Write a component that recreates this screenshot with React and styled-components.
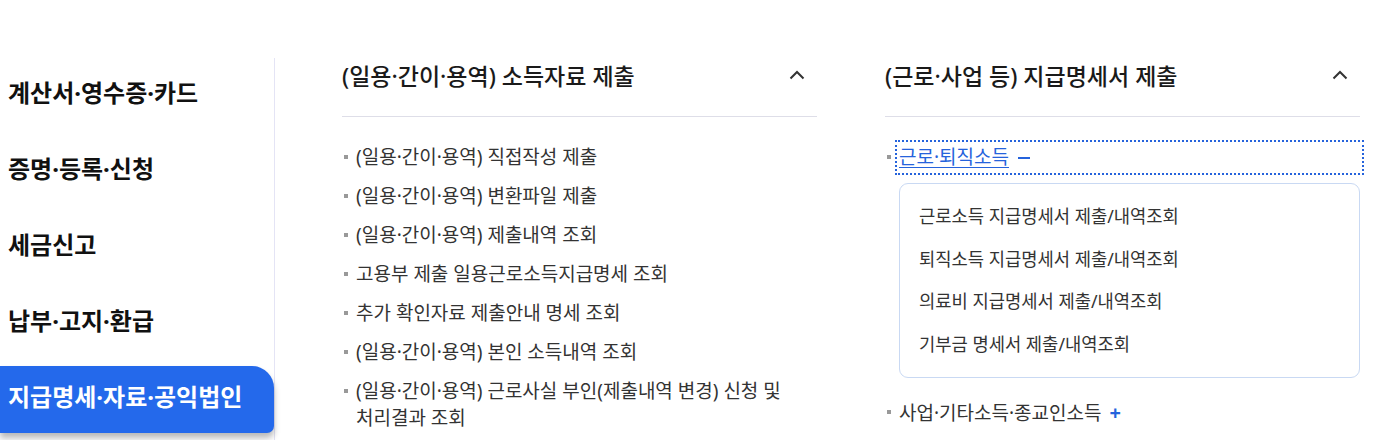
import React from "react";
import styled, { createGlobalStyle } from "styled-components";

const Global = createGlobalStyle`
  html, body { margin: 0; padding: 0; background: #fff; }
  body { font-family: "Noto Sans", "Noto Sans CJK KR", sans-serif; color: #222; }
  ul { list-style: none; margin: 0; padding: 0; }
`;

const Page = styled.div`
  display: flex;
  align-items: flex-start;
  padding-top: 58px;
  height: 382px;
  overflow: hidden;
`;

const Sidebar = styled.nav`
  width: 274px;
  flex: none;
  border-right: 1px solid #e4e4f5;
  padding-top: 4px;
  display: flex;
  flex-direction: column;
  gap: 9px;
  min-height: 400px;
`;

const SideItem = styled.a`
  display: flex;
  align-items: center;
  height: 67px;
  padding-left: 8px;
  padding-bottom: 9px;
  box-sizing: border-box;
  font-size: 24px;
  font-weight: 700;
  color: ${(p) => (p.$active ? "#fff" : "#111")};
  background: ${(p) => (p.$active ? "#2469eb" : "transparent")};
  border-radius: 0 22px 7px 0;
  box-shadow: ${(p) => (p.$active ? "0 5px 6px rgba(0,0,0,0.28)" : "none")};
  text-decoration: none;
`;

const Columns = styled.div`
  display: flex;
  gap: 68px;
  margin-left: 67px;
`;

const Column = styled.section`
  width: 475px;
`;

const Header = styled.div`
  display: flex;
  align-items: center;
  justify-content: space-between;
  height: 36px;
  padding-bottom: 22px;
  border-bottom: 1px solid #dedee8;
`;

const Title = styled.h3`
  margin: 0;
  font-size: 23px;
  font-weight: 500;
  color: #1a1a1a;
  padding-bottom: 2px;
`;

const Chevron = styled.svg`
  width: 16px;
  height: 10px;
  margin-right: 12px;
  margin-bottom: 3px;
`;

const List = styled.ul`
  display: flex;
  flex-direction: column;
  gap: 12px;
  padding-top: 27px;
`;

const Item = styled.li`
  position: relative;
  padding-left: 14px;
  font-size: 19px;
  line-height: 27px;
  color: #333;
  word-break: keep-all;
  &::before {
    content: "";
    position: absolute;
    left: 2px;
    top: 11px;
    width: 4px;
    height: 4px;
    background: #999;
  }
`;

const FocusLink = styled.a`
  display: block;
  color: #2563dc;
  outline: 2px dotted #2563dc;
  outline-offset: 2px;
  span {
    text-decoration: underline;
    text-underline-offset: 3px;
  }
`;

const Minus = styled.i`
  display: inline-block;
  width: 12px;
  height: 2px;
  background: #2563dc;
  margin-left: 9px;
  vertical-align: middle;
  position: relative;
  top: -1px;
`;

const Plus = styled.span`
  color: #2563dc;
  font-weight: 700;
  margin-left: 8px;
  font-size: 20px;
`;

const SubBox = styled.ul`
  margin: 12px 0 9px 0;
  border: 1px solid #c9d9f3;
  border-radius: 9px;
  padding: 20px 19px 21px;
  display: flex;
  flex-direction: column;
  gap: 18.6px;
`;

const SubItem = styled.li`
  font-size: 17.7px;
  line-height: 24px;
  color: #333;
`;

const Up = () => (
  <Chevron viewBox="0 0 16 10">
    <polyline points="1.5,8.5 8,2 14.5,8.5" fill="none" stroke="#333" strokeWidth="2" />
  </Chevron>
);

const side = [
  "계산서·영수증·카드",
  "증명·등록·신청",
  "세금신고",
  "납부·고지·환급",
  "지급명세·자료·공익법인",
];

const leftItems = [
  "(일용·간이·용역) 직접작성 제출",
  "(일용·간이·용역) 변환파일 제출",
  "(일용·간이·용역) 제출내역 조회",
  "고용부 제출 일용근로소득지급명세 조회",
  "추가 확인자료 제출안내 명세 조회",
  "(일용·간이·용역) 본인 소득내역 조회",
  "(일용·간이·용역) 근로사실 부인(제출내역 변경) 신청 및 처리결과 조회",
];

const subItems = [
  "근로소득 지급명세서 제출/내역조회",
  "퇴직소득 지급명세서 제출/내역조회",
  "의료비 지급명세서 제출/내역조회",
  "기부금 명세서 제출/내역조회",
];

export default function App() {
  return (
    <>
      <Global />
      <Page>
        <Sidebar>
          {side.map((s, i) => (
            <SideItem key={s} $active={i === side.length - 1}>
              {s}
            </SideItem>
          ))}
        </Sidebar>
        <Columns>
          <Column>
            <Header>
              <Title>(일용·간이·용역) 소득자료 제출</Title>
              <Up />
            </Header>
            <List>
              {leftItems.map((t) => (
                <Item key={t}>{t}</Item>
              ))}
            </List>
          </Column>
          <Column>
            <Header>
              <Title>(근로·사업 등) 지급명세서 제출</Title>
              <Up />
            </Header>
            <List>
              <Item>
                <FocusLink>
                  <span>근로·퇴직소득</span>
                  <Minus aria-label="접기" />
                </FocusLink>
                <SubBox>
                  {subItems.map((t) => (
                    <SubItem key={t}>{t}</SubItem>
                  ))}
                </SubBox>
              </Item>
              <Item>
                사업·기타소득·종교인소득<Plus>+</Plus>
              </Item>
            </List>
          </Column>
        </Columns>
      </Page>
    </>
  );
}
